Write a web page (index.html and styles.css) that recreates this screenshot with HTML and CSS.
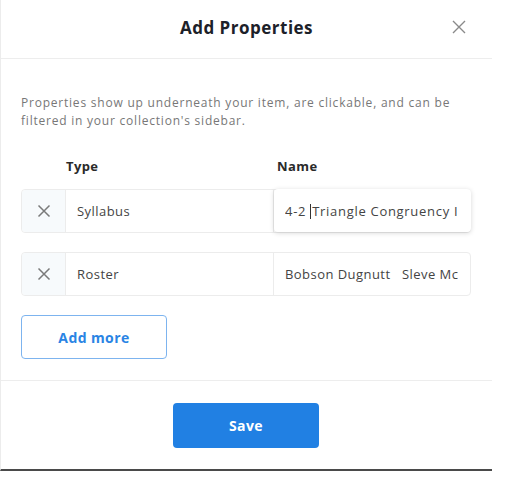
FILE: index.html
```html
<!DOCTYPE html>
<html>
<head>
<meta charset="utf-8">
<link rel="stylesheet" href="styles.css">
</head>
<body>
<div class="modal">
  <div class="header">
    <h2 class="title">Add Properties</h2>
    <button class="close" aria-label="Close">
      <svg width="14" height="14" viewBox="0 0 14 14"><path d="M1 1L13 13M13 1L1 13" stroke="#8a8a8a" stroke-width="1.4" fill="none"/></svg>
    </button>
  </div>
  <div class="body">
    <p class="desc">Properties show up underneath your item, are clickable, and can be filtered in your collection's sidebar.</p>
    <div class="cols">
      <span class="col-type">Type</span>
      <span class="col-name">Name</span>
    </div>
    <div class="row">
      <div class="remove"><svg width="14" height="14" viewBox="0 0 14 14"><path d="M1.5 1.5L12.5 12.5M12.5 1.5L1.5 12.5" stroke="#7a7a7a" stroke-width="1.5" fill="none"/></svg></div>
      <div class="cell type">Syllabus</div>
      <div class="cell name focused"><span class="clip">4-2 <span class="caret"></span>Triangle Congruency I</span></div>
    </div>
    <div class="row">
      <div class="remove"><svg width="14" height="14" viewBox="0 0 14 14"><path d="M1.5 1.5L12.5 12.5M12.5 1.5L1.5 12.5" stroke="#7a7a7a" stroke-width="1.5" fill="none"/></svg></div>
      <div class="cell type">Roster</div>
      <div class="cell name"><span class="clip">Bobson Dugnutt&nbsp;&nbsp; Sleve Mc</span></div>
    </div>
    <button class="add-more">Add more</button>
  </div>
  <div class="footer">
    <button class="save">Save</button>
  </div>
</div>
</body>
</html>
```
FILE: styles.css
```css
* { box-sizing: border-box; }
body {
  margin: 0;
  background: #fff;
  font-family: "Open Sans", Inter, "Liberation Sans", sans-serif;
}
.modal {
  width: 492px;
  height: 471px;
  background: #fff;
  border-left: 1px solid #ececec;
  border-bottom: 2px solid #4a4a4a;
  display: flex;
  flex-direction: column;
}
.header {
  height: 59px;
  border-bottom: 1px solid #ededed;
  display: flex;
  align-items: center;
  justify-content: center;
  position: relative;
}
.title {
  margin: 0;
  font-size: 17px;
  font-weight: 700;
  color: #1c2129;
  letter-spacing: 0.5px;
  padding-bottom: 4px;
}
.close {
  position: absolute;
  right: 26px;
  top: 20px;
  border: 0;
  background: none;
  padding: 0;
  width: 14px;
  height: 14px;
  display: flex;
}
.body {
  padding: 35px 21px 0 20px;
  flex: 1;
}
.desc {
  margin: 0;
  font-size: 12px;
  line-height: 18px;
  color: #777;
  letter-spacing: 0.78px;
}
.cols {
  display: flex;
  margin-top: 27px;
  height: 20px;
  font-size: 13px;
  font-weight: 700;
  color: #2a2a2a;
  letter-spacing: 0.4px;
}
.col-type { width: 256px; padding-left: 45px; }
.row {
  display: flex;
  height: 44px;
  margin-top: 12px;
  border: 1px solid #ececec;
  border-radius: 4px;
  width: 450px;
}
.row + .row { margin-top: 19px; }
.remove {
  width: 44px;
  background: #f7fafc;
  border-right: 1px solid #ececec;
  display: flex;
  align-items: center;
  justify-content: center;
  border-radius: 4px 0 0 4px;
}
.cell {
  display: flex;
  align-items: center;
  font-size: 13px;
  color: #444;
  padding-left: 11px;
  white-space: nowrap;
  letter-spacing: 0.45px;
}
.type { width: 208px; border-right: 1px solid #ececec; }
.name { flex: 1; padding-right: 10px; min-width: 0; }
.clip { display: block; overflow: hidden; max-width: 100%; }
.name.focused {
  background: #fff;
  border-radius: 4px;
  box-shadow: 0 1px 5px rgba(0,0,0,0.16);
  margin: -1px -1px 0 0;
  letter-spacing: 0.7px;
}
.caret {
  display: inline-block;
  width: 1px;
  height: 15px;
  background: #333;
  margin-right: 1px;
  vertical-align: -3px;
}
.add-more {
  display: block;
  margin-top: 19px;
  width: 146px;
  height: 44px;
  background: #fff;
  border: 1px solid #7db4ef;
  border-radius: 4px;
  color: #2a84e4;
  font-family: inherit;
  font-size: 14px;
  font-weight: 700;
  letter-spacing: 0.4px;
}
.footer {
  height: 89px;
  border-top: 1px solid #ededed;
  display: flex;
  justify-content: center;
  padding-top: 22px;
  padding-right: 1px;
}
.save {
  width: 146px;
  height: 45px;
  background: #2180e3;
  border: 0;
  border-radius: 4px;
  color: #fff;
  font-family: inherit;
  font-size: 14px;
  font-weight: 700;
  letter-spacing: 0.4px;
}
```
